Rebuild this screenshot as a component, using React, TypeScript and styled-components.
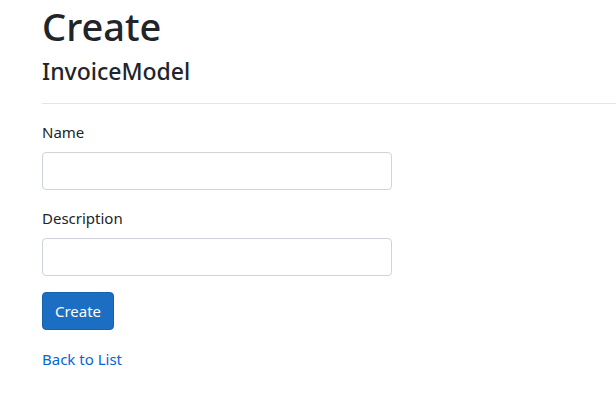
import React from "react";
import styled, { createGlobalStyle } from "styled-components";

const Global = createGlobalStyle`
  html, body { margin: 0; padding: 0; background: #fff; }
  body { font-family: "Noto Sans", "Open Sans", sans-serif; color: #212529; }
  * { box-sizing: border-box; }
`;

const Page = styled.div`
  padding: 0 0 0 42px;
`;

const Title = styled.h1`
  margin: 0;
  padding-top: 2px;
  font-size: 38px;
  font-weight: 500;
  line-height: 48px;
  color: #212529;
`;

const Subtitle = styled.h4`
  margin: 6px 0 0;
  font-size: 23px;
  font-weight: 500;
  line-height: 31px;
  color: #212529;
`;

const Rule = styled.hr`
  margin: 16px 0 0;
  border: 0;
  border-top: 1px solid #e5e5e5;
`;

const Form = styled.form`
  display: flex;
  flex-direction: column;
  width: 350px;
  padding-top: 16px;
`;

const Group = styled.div`
  display: flex;
  flex-direction: column;
  margin-bottom: 16px;
`;

const Label = styled.label`
  font-size: 15px;
  line-height: 25px;
  margin-bottom: 7px;
`;

const Input = styled.input`
  width: 350px;
  height: 38px;
  border: 1px solid #ced4da;
  border-radius: 4px;
  padding: 6px 12px;
  font-size: 16px;
  font-family: inherit;
`;

const Button = styled.button`
  align-self: flex-start;
  width: 72px;
  height: 38px;
  background: #1b6ec2;
  border: 1px solid #1861ac;
  border-radius: 4px;
  color: #fff;
  font-family: inherit;
  font-size: 15px;
  padding: 0;
`;

const LinkRow = styled.div`
  margin-top: 17px;
`;

const Link = styled.a`
  color: #0366d6;
  font-size: 15px;
  line-height: 24px;
  text-decoration: none;
`;

export default function App() {
  return (
    <Page>
      <Global />
      <Title>Create</Title>
      <Subtitle>InvoiceModel</Subtitle>
      <Rule />
      <Form onSubmit={(e) => e.preventDefault()}>
        <Group>
          <Label>Name</Label>
          <Input />
        </Group>
        <Group>
          <Label>Description</Label>
          <Input />
        </Group>
        <Button type="submit">Create</Button>
      </Form>
      <LinkRow>
        <Link href="#">Back to List</Link>
      </LinkRow>
    </Page>
  );
}
